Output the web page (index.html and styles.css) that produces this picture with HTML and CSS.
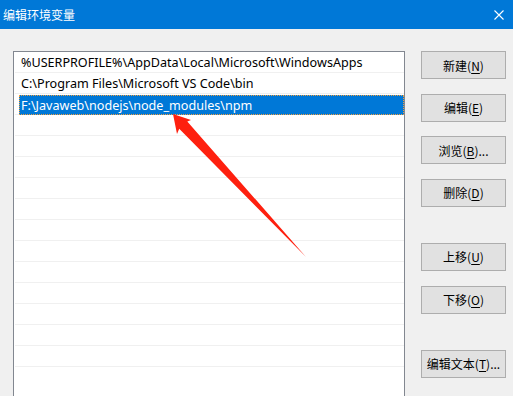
FILE: index.html
```html
<!DOCTYPE html>
<html lang="zh-CN">
<head>
<meta charset="utf-8">
<title>编辑环境变量</title>
<link rel="stylesheet" href="styles.css">
</head>
<body>
<div class="window">
  <div class="titlebar">
    <span class="title">编辑环境变量</span>
    <svg class="close" width="10" height="10" viewBox="0 0 10 10"><path d="M0.5 0.5 L9.5 9.5 M9.5 0.5 L0.5 9.5" stroke="#fff" stroke-width="1.1" fill="none"/></svg>
  </div>
  <div class="content">
    <div class="list">
      <div class="row"><span class="item">%USERPROFILE%\AppData\Local\Microsoft\WindowsApps</span></div>
      <div class="row"><span class="item">C:\Program Files\Microsoft VS Code\bin</span></div>
      <div class="row"><span class="item selected">F:\Javaweb\nodejs\node_modules\npm</span></div>
      <div class="row"></div>
      <div class="row"></div>
      <div class="row"></div>
      <div class="row"></div>
      <div class="row"></div>
      <div class="row"></div>
      <div class="row"></div>
      <div class="row"></div>
      <div class="row"></div>
      <div class="row"></div>
      <div class="row"></div>
      <div class="row"></div>
    </div>
    <div class="buttons">
      <div class="btn">新建(<u>N</u>)</div>
      <div class="btn">编辑(<u>E</u>)</div>
      <div class="btn">浏览(<u>B</u>)...</div>
      <div class="btn">删除(<u>D</u>)</div>
      <div class="btn sep">上移(<u>U</u>)</div>
      <div class="btn">下移(<u>O</u>)</div>
      <div class="btn sep">编辑文本(<u>T</u>)...</div>
    </div>
  </div>
  <svg class="arrow" width="513" height="396" viewBox="0 0 513 396">
    <polygon points="173,114 191,120 187.3,121.4 306,257 179.2,128.8 177,134" fill="#fe200f"/>
  </svg>
</div>
</body>
</html>
```
FILE: styles.css
```css
html, body {
  margin: 0;
  padding: 0;
}
body {
  width: 513px;
  height: 396px;
  overflow: hidden;
  background: #f0f0f0;
  font-family: "Noto Sans", "Noto Sans CJK SC", sans-serif;
  font-size: 12px;
  color: #000;
}
.window {
  position: relative;
  width: 513px;
  height: 396px;
  overflow: hidden;
}
.titlebar {
  height: 29px;
  background: #0078d7;
  color: #fff;
  display: flex;
  align-items: center;
  justify-content: space-between;
  padding: 0 4px 0 3px;
  box-sizing: border-box;
}
.title {
  font-family: "Noto Sans CJK SC", sans-serif;
  font-size: 12px;
  line-height: 1;
}
.close {
  margin-right: 5px;
}
.content {
  display: flex;
  align-items: flex-start;
  padding: 22px 7px 0 13px;
}
.list {
  width: 390px;
  height: 360px;
  background: #fff;
  border: 1px solid #828790;
  padding-left: 1px;
  box-sizing: content-box;
}
.row {
  height: 20px;
  border-bottom: 1px solid #f0f0f0;
  display: flex;
}
.item {
  display: flex;
  align-items: center;
  padding-left: 2px;
  margin-left: 4px;
  flex: 1;
  white-space: nowrap;
  font-size: 12.6px;
}
.selected {
  background: #0078d7;
  color: #fff;
  outline: 1px dotted #f0a040;
  outline-offset: -1px;
  margin-top: 1px;
  margin-bottom: -1px;
}
.buttons {
  margin-left: 16px;
  display: flex;
  flex-direction: column;
  gap: 14.67px;
}
.btn {
  width: 85px;
  height: 28px;
  box-sizing: border-box;
  background: #e1e1e1;
  border: 1px solid #adadad;
  display: flex;
  align-items: center;
  justify-content: center;
  font-family: "Noto Sans CJK SC", sans-serif;
  font-size: 12px;
  white-space: nowrap;
}
.btn u {
  text-underline-offset: 2px;
}
.sep {
  margin-top: 21.33px;
}
.arrow {
  position: absolute;
  left: 0;
  top: 0;
  pointer-events: none;
}
```
